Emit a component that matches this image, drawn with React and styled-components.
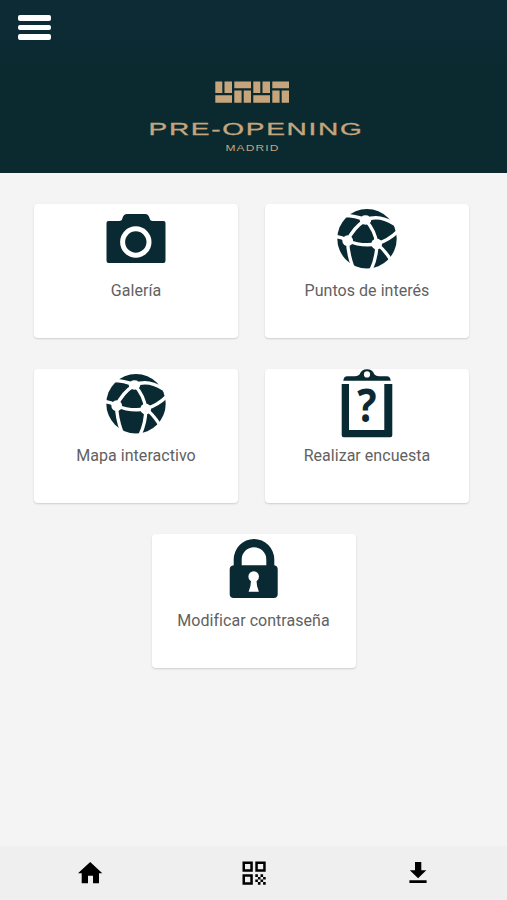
import React from 'react';
import styled, { createGlobalStyle } from 'styled-components'

const GlobalStyle = createGlobalStyle`
  * {
    box-sizing: border-box;
  }
  body {
    margin: 0;
    background: #f4f4f4;
    font-family: Roboto, "Liberation Sans", sans-serif;
  }
`

const HomeStyled = styled.div`
  display: flex;
  flex-direction: column;
  height: 900px;
  background: #f4f4f4;
`

const Header = styled.header`
  height: 173px;
  padding-top: 15px;
  background: linear-gradient(#0c2b36 0, #0c2b35 30px, #0a2a2f 75px);
`

const MenuButton = styled.button`
  display: flex;
  flex-direction: column;
  gap: 4px;
  width: 33px;
  margin: 0 0 0 18px;
  padding: 0;
  border: 0;
  background: none;
`

const MenuLine = styled.span`
  height: 5.5px;
  border-radius: 2px;
  background: #fff;
`

const Brand = styled.svg`
  display: block;
  width: 220px;
  height: 76px;
  margin: 38px 0 0 146px;
  fill: #c7a57c;
  font-family: "Liberation Sans", sans-serif;
`

const CardList = styled.main`
  flex: 1;
  display: flex;
  flex-wrap: wrap;
  justify-content: center;
  align-content: flex-start;
  gap: 31px 27px;
  padding: 31px 30px 0 26px;
`

const CardStyled = styled.a`
  display: flex;
  flex-direction: column;
  align-items: center;
  width: 204px;
  height: 134px;
  border-radius: 4px;
  background: #fff;
  box-shadow: 0 1px 2px rgba(0, 0, 0, 0.16);
  color: #616161;

  &:last-child {
    margin-left: 4px;
  }
`

const CardIcon = styled.svg`
  width: 80px;
  height: 72px;
  fill: #0a2a33;
`

const CardTitle = styled.span`
  margin-top: 5px;
  font-size: 16px;
  line-height: 20px;
  letter-spacing: 0.04px;
  white-space: nowrap;
`

const FooterStyled = styled.footer`
  display: flex;
  justify-content: space-between;
  height: 54px;
  padding: 12px 74px 0 75px;
  background: #efefef;
`

const FooterIcon = styled.svg`
  width: 30px;
  height: 30px;
  fill: #000;
`

function Logo() {
  return (
    <Brand viewBox="146 78 220 76">
      {[215.3, 253.3].map((x) => (
        <g key={x} transform={`translate(${x} 81.5)`}>
          <path d="M0 0h7v11.6H0zM9.2 0h7.500v11.6H9.200zM0 13.800h16.700v7.400H0z" />
          <path d="M19 0h16.700v6.700H19zM19 9h7.300v12.200H19zM28.400 9h7.300v12.200h-7.300z" />
        </g>
      ))}
      <text x="148.5" y="135.2" fontSize="16.5" textLength="215" lengthAdjust="spacingAndGlyphs" letterSpacing="1" stroke="#c7a57c" strokeWidth="0.3">PRE-OPENING</text>
      <text x="225.5" y="151.2" fontSize="8.5" textLength="54" lengthAdjust="spacingAndGlyphs" letterSpacing="0.8">MADRID</text>
    </Brand>
  );
}

function CameraIcon() {
  return (
    <CardIcon viewBox="0 0 80 72">
      <path d="M12.5 17H23c2.5 0 3-1.2 3.5-3 .8-2.8 2.3-4 4.5-4h18c2.5 0 3.7 1.2 4.5 4 .5 1.800 1 3 3.500 3h10.500q2 0 2 2v37.500q0 2.500-2 2.500h-55q-2 0-2-2.500V19q0-2 2-2z" />
      <circle cx="39.8" cy="38" r="13.2" fill="none" stroke="#fff" strokeWidth="5" />
    </CardIcon>
  );
}

function GlobeIcon() {
  return (
    <CardIcon viewBox="0 0 80 72">
      <circle cx="40" cy="34.7" r="29.7" />
      <g fill="none" stroke="#fff" strokeWidth="3.3">
        <path d="M17 11.500Q28 11.500 38.500 16Q52 10 67 20" />
        <path d="M38.500 16Q26 24 20.700 36.700Q34 42.500 49.700 40Q48.500 27 38.500 16" />
        <path d="M9 32.500Q15 33 20.700 36.700Q20.500 48 25.500 62" />
        <path d="M49.700 40Q62 36 70 28M49.700 40Q57 45 63.500 55.500M49.700 40Q50 53 44 66" />
      </g>
      <g fill="#fff">
        <ellipse cx="38.5" cy="16" rx="5.8" ry="4.7" />
        <circle cx="20.7" cy="36.7" r="5.4" />
        <circle cx="49.7" cy="40" r="5.4" />
      </g>
    </CardIcon>
  );
}

const Question = styled.text`
  font: bold 46px "Open Sans", sans-serif;
`

function SurveyIcon() {
  return (
    <CardIcon viewBox="0 0 80 72">
      <path d="M14.7 15H22v46h35.300V15h8v51.300q0 2-2 2H16.700q-2 0-2-2z" />
      <path fillRule="evenodd" d="M16.300 11.700q.5-4.400 4-4.400H28q3 0 4.500-1.800Q34.500.3 40 .3t7.500 5.200Q49 7.300 52 7.300h7.700q3.500 0 4 4.400zM40 2.300a3.100 3.100 0 1 0 0 6.200a3.100 3.100 0 1 0 0-6.200z" />
      <Question transform="translate(40 53.3) scale(0.88 1)" textAnchor="middle">?</Question>
    </CardIcon>
  );
}

function LockIcon() {
  return (
    <CardIcon viewBox="0 0 80 72">
      <path fillRule="evenodd" d="M19.700 31.300V25.500a20.300 20.500 0 0 1 40.600 0v5.800q3.400.5 3.400 4V60q0 4-4 4h-40q-4 0-4-4V35.300q0-3.500 4-4zM27.700 31.300h24.600V25.500a12.300 12.300 0 0 0-24.600 0z" />
      <circle cx="39.7" cy="42.5" r="5.3" fill="#fff" />
      <path d="M37 44h5.500q-.5 7 2.400 13.700H34.600Q37.500 51 37 44z" fill="#fff" />
    </CardIcon>
  );
}

function Card({ title, icon }) {
  return (
    <CardStyled>
      {icon}
      <CardTitle>{title}</CardTitle>
    </CardStyled>
  );
}

function Footer() {
  return (
    <FooterStyled>
      <FooterIcon viewBox="0 0 30 30">
        <path d="M15.200 4L27.300 15.200H24V25.300H18V17.800H13V25.300H6.700V15.200H3z" />
      </FooterIcon>
      <FooterIcon viewBox="0 0 30 30">
        <path fillRule="evenodd" d="M3.500 3.500h10.300v10.300H3.500zM6 6v5.300h5.300V6zM16.300 3.500h10.400v10.300H16.300zM18.800 6v5.300h5.400V6zM3.500 16.300h10.300v10.400H3.500zM6 18.800v5.400h5.300v-5.400z" />
        <path d="M16.300 16.300h2.600v2.600h-2.600zM21.500 16.300h2.600v2.600h-2.600zM18.900 18.900h2.600v2.600h-2.600zM24.100 18.900h2.600v2.600h-2.600zM16.300 21.500h2.600v2.600h-2.600zM21.500 21.500h2.600v2.600h-2.600zM18.900 24.100h2.600v2.600h-2.600zM24.100 24.100h2.600v2.600h-2.600z" />
      </FooterIcon>
      <FooterIcon viewBox="0 0 30 30">
        <path d="M12 4h6.300v8.300h5L15.100 20.300L6.800 12.300H12zM6.400 22.300h17.200v2.800H6.400z" />
      </FooterIcon>
    </FooterStyled>
  );
}

function App() {
  return (
    <HomeStyled>
      <GlobalStyle />
      <Header>
        <MenuButton aria-label="Menú">
          <MenuLine />
          <MenuLine />
          <MenuLine />
        </MenuButton>
        <Logo />
      </Header>
      <CardList>
        <Card title="Galería" icon={<CameraIcon />} />
        <Card title="Puntos de interés" icon={<GlobeIcon />} />
        <Card title="Mapa interactivo" icon={<GlobeIcon />} />
        <Card title="Realizar encuesta" icon={<SurveyIcon />} />
        <Card title="Modificar contraseña" icon={<LockIcon />} />
      </CardList>
      <Footer />
    </HomeStyled>
  );
}


export default App;
